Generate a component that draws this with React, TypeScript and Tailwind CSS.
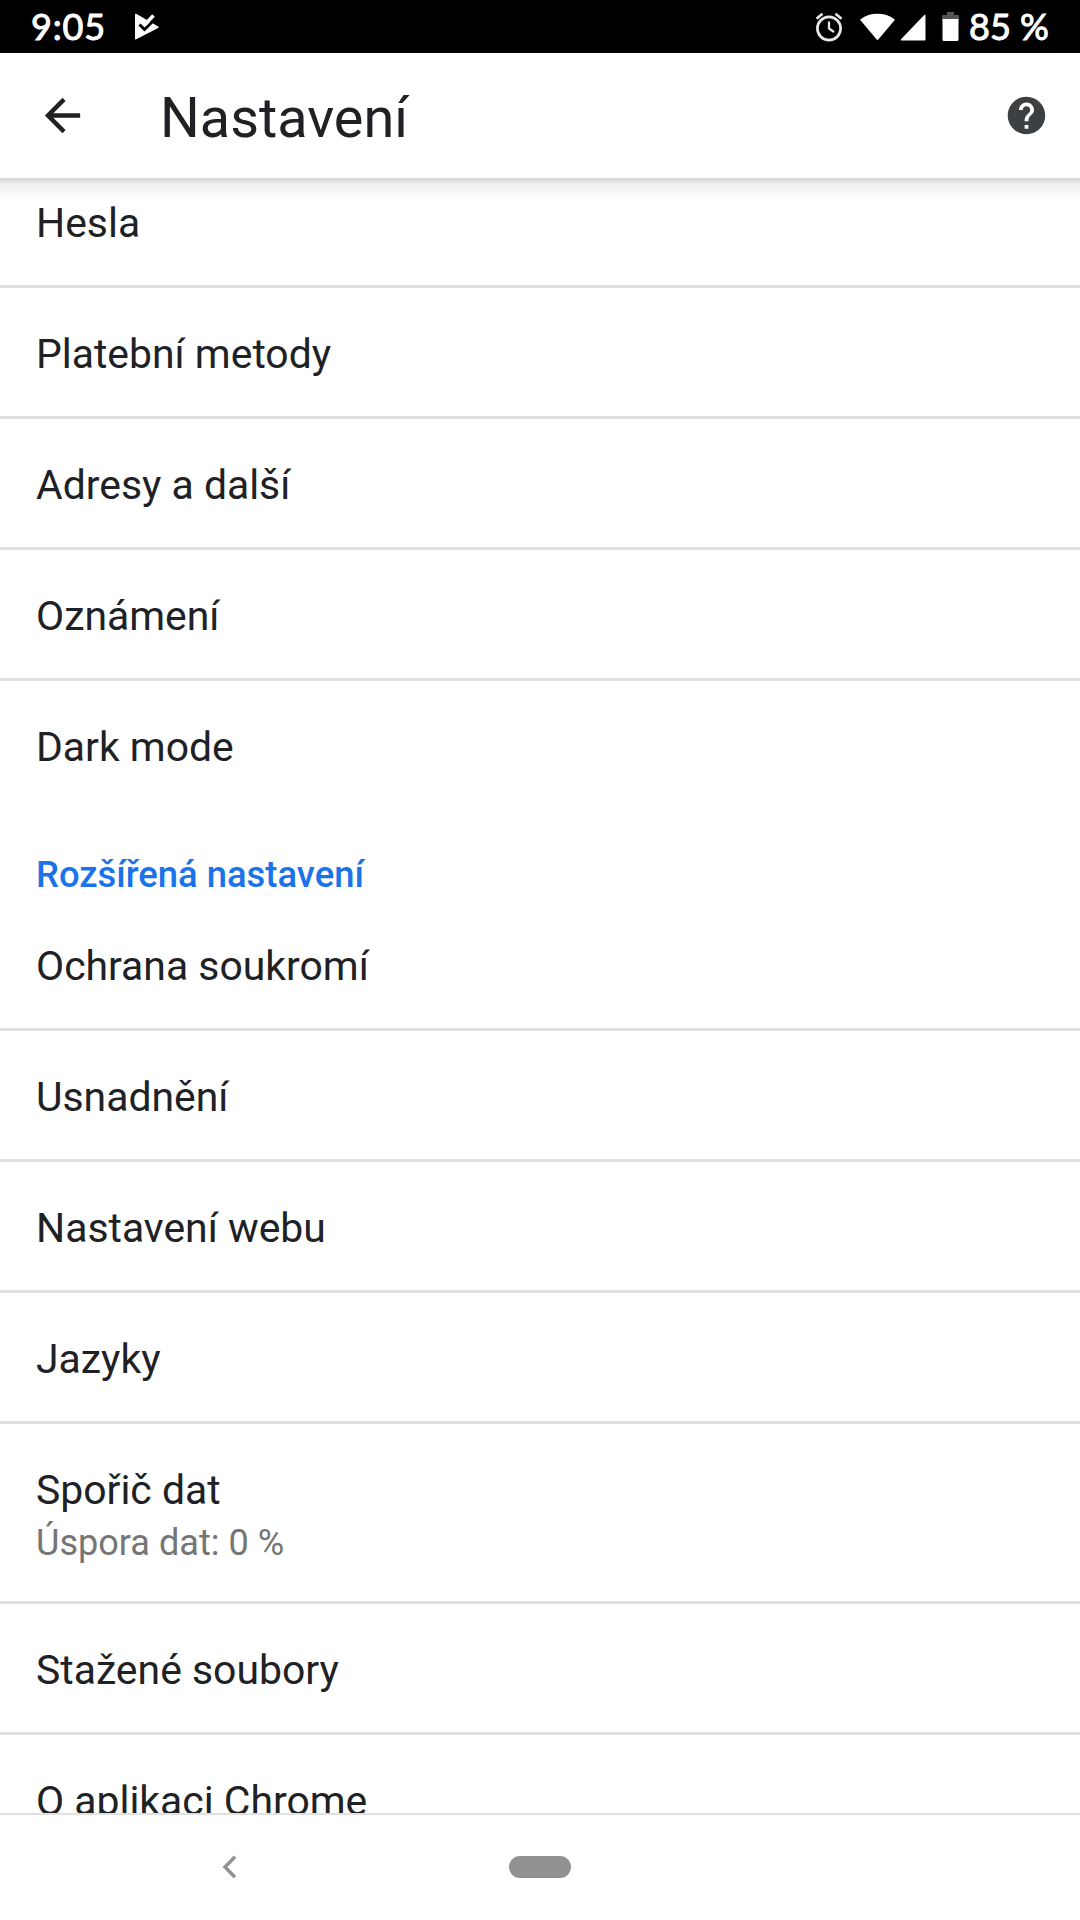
type Item = { title: string; summary?: string; divider?: boolean };

const basicItems: Item[] = [
  { title: 'Hesla' },
  { title: 'Platební metody' },
  { title: 'Adresy a další' },
  { title: 'Oznámení' },
  { title: 'Dark mode', divider: false },
];

const advancedItems: Item[] = [
  { title: 'Ochrana soukromí' },
  { title: 'Usnadnění' },
  { title: 'Nastavení webu' },
  { title: 'Jazyky' },
  { title: 'Spořič dat', summary: 'Úspora dat: 0 %' },
  { title: 'Stažené soubory' },
  { title: 'O aplikaci Chrome', divider: false },
];

function StatusBar() {
  return (
    <div className="h-[53px] shrink-0 bg-black text-white flex items-center justify-between px-[31px] font-['Lato',sans-serif] text-[36px] leading-none [-webkit-text-stroke:1px_white]">
      <div className="flex items-center">
        <span className="pb-[2px] tracking-[0.8px]">9:05</span>
        {/* Play Protect notification */}
        <svg className="ml-[28px]" width="26" height="28" viewBox="0 0 26 28">
          <path d="M1 1.500v24q0 1.300 1.200.7L24.200 15q1.200-.8 0-1.600L2.200.8Q1 .3 1 1.500z" fill="#fff" />
          <path d="M5.500 11.500l5 5L21.500 5.500" fill="none" stroke="#000" strokeWidth="3" />
          <path d="M10.500 12L19.500 2.500" fill="none" stroke="#fff" strokeWidth="3.500" />
        </svg>
      </div>

      <div className="flex items-center">
        {/* Alarm */}
        <svg width="28" height="30" viewBox="0 0 28 30" fill="none" stroke="#e8e8e8">
          <circle cx="14" cy="16.500" r="11.600" strokeWidth="2.700" />
          <path d="M14 9.500v7l5 3.500" strokeWidth="2.300" />
          <path d="M1.500 6.800L7.500 1.800M26.500 6.800l-6-5" strokeWidth="2.600" />
        </svg>
        {/* Wifi */}
        <svg className="ml-[17px]" width="35" height="28" viewBox="0 0 35 28" fill="#fff">
          <path d="M.6 6.200Q8 .8 17.500.8t16.900 5.400q.5.500.1 1L18.300 26.600q-.8.900-1.600 0L.5 7.200q-.4-.5.100-1z" />
        </svg>
        {/* Mobile signal */}
        <svg className="ml-[5px]" width="26" height="28" viewBox="0 0 26 28" fill="#fff">
          <path d="M25.500 2.500v24q0 1-1 1H1.500q-1.500 0-.5-1.200L24 2.200q1.500-1 1.500.300z" />
        </svg>
        {/* Battery */}
        <svg className="ml-[16px]" width="17" height="29" viewBox="0 0 17 29">
          <path d="M5 0h7v3h4q1 0 1 1v4H0V4q0-1 1-1h4z" fill="#555" />
          <path d="M.5 7h16v20.500q0 1.500-1.500 1.500H2q-1.500 0-1.500-1.500z" fill="#fff" />
        </svg>
        <span className="ml-[10px] w-[80px] pb-[2px] whitespace-nowrap">85 %</span>
      </div>
    </div>
  );
}

function Toolbar() {
  return (
    <header className="relative z-10 h-[125px] shrink-0 bg-white flex items-center pl-[36px] pr-[31px]">
      <svg width="53" height="53" viewBox="0 0 24 24" fill="#202124">
        <path d="M20 11H7.830l5.590-5.590L12 4l-8 8 8 8 1.410-1.410L7.830 13H20v-2z" />
      </svg>
      <h1 className="ml-[71px] pt-[5px] flex-1 text-[55.8px] leading-[65px]">Nastavení</h1>
      <svg width="45" height="45" viewBox="0 0 24 24" fill="#3c4043">
        <path d="M12 2C6.480 2 2 6.480 2 12s4.480 10 10 10 10-4.480 10-10S17.520 2 12 2zm1 17h-2v-2h2v2zm2.070-7.750l-.9.920C13.450 12.900 13 13.500 13 15h-2v-.5c0-1.100.450-2.100 1.170-2.830l1.240-1.260c.370-.360.590-.860.590-1.410 0-1.100-.9-2-2-2s-2 .9-2 2H8c0-2.210 1.790-4 4-4s4 1.790 4 4c0 .880-.360 1.680-.930 2.250z" />
      </svg>
      {/* Drop shadow over the list */}
      <div className="absolute left-0 top-full h-[20px] w-full bg-[linear-gradient(to_bottom,#d9d9db_0px,#dededf_3px,#eeeeef_5px,#f4f4f5_10px,#fafafb_16px,#ffffff_20px)]" />
    </header>
  );
}

function Row({ title, summary, divider = true }: Item) {
  return (
    <div
      className={`shrink-0 px-9 pt-[42px] border-b-3 ${divider ? 'border-[#e0e0e0]' : 'border-transparent'} ${
        summary ? 'h-[180px]' : 'h-[131px]'
      }`}
    >
      <div className="text-[40.9px] leading-[48px]">{title}</div>
      {summary && <div className="mt-2 text-[36.1px] leading-[43px] text-[#757575]">{summary}</div>}
    </div>
  );
}

function NavBar() {
  return (
    <nav className="h-[107px] shrink-0 border-t-2 border-[#e0e0e0] bg-white grid grid-cols-[222px_1fr_222px] items-center pb-[1px]">
      <svg className="justify-self-end -mr-[15px] -mt-[1px]" width="15" height="24" viewBox="0 0 15 24" fill="none" stroke="#919193" strokeWidth="3.400">
        <path d="M13 1.800L3 12l10 10.200" />
      </svg>
      <div className="justify-self-center w-[62px] h-[22px] rounded-full bg-[#919193]" />
    </nav>
  );
}

export default function App() {
  return (
    <div className="w-[1080px] h-[1920px] flex flex-col overflow-hidden bg-white text-[#202124] font-['Roboto',sans-serif]">
      <StatusBar />
      <Toolbar />
      <main className="flex-1 min-h-0 overflow-hidden">
        {/* List is scrolled slightly under the toolbar */}
        <div className="-mt-[21px] flex flex-col">
          {basicItems.map((item) => (
            <Row key={item.title} {...item} />
          ))}
          <h2 className="h-[88px] shrink-0 flex items-end px-9 pb-1 text-[36.4px] leading-[43px] font-medium text-[#1a73e8]">
            Rozšířená nastavení
          </h2>
          {advancedItems.map((item) => (
            <Row key={item.title} {...item} />
          ))}
        </div>
      </main>
      <NavBar />
    </div>
  );
}
